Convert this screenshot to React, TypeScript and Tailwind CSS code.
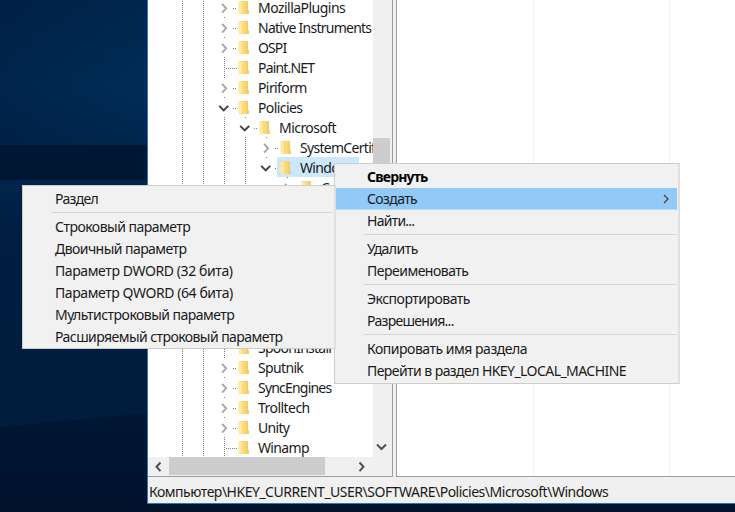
import React from 'react';

type Node = { label: string; level: number; state: 'open' | 'closed' | 'leaf'; tracking: string; selected?: boolean };
type Item = { label: string; tracking: string; bold?: boolean; active?: boolean };

const topNodes: Node[] = [
    { label: 'MozillaPlugins', level: 2, state: 'closed', tracking: 'tracking-[-0.53px]' },
    { label: 'Native Instruments', level: 2, state: 'closed', tracking: 'tracking-[-0.75px]' },
    { label: 'OSPI', level: 2, state: 'closed', tracking: 'tracking-[-0.9px]' },
    { label: 'Paint.NET', level: 2, state: 'leaf', tracking: 'tracking-[-0.83px]' },
    { label: 'Piriform', level: 2, state: 'closed', tracking: 'tracking-[-0.6px]' },
    { label: 'Policies', level: 2, state: 'open', tracking: 'tracking-[-0.6px]' },
    { label: 'Microsoft', level: 3, state: 'open', tracking: 'tracking-[-0.55px]' },
    { label: 'SystemCertificates', level: 4, state: 'closed', tracking: 'tracking-[-0.7px]' },
    { label: 'Windows', level: 4, state: 'open', tracking: 'tracking-[-0.65px]', selected: true },
    { label: 'CurrentVersion', level: 5, state: 'closed', tracking: 'tracking-[-0.6px]' },
];

const bottomNodes: Node[] = [
    { label: 'SpoonInstall', level: 2, state: 'leaf', tracking: 'tracking-[-0.75px]' },
    { label: 'Sputnik', level: 2, state: 'closed', tracking: 'tracking-[-0.65px]' },
    { label: 'SyncEngines', level: 2, state: 'closed', tracking: 'tracking-[-0.8px]' },
    { label: 'Trolltech', level: 2, state: 'closed', tracking: 'tracking-[-0.55px]' },
    { label: 'Unity', level: 2, state: 'closed', tracking: 'tracking-[-0.7px]' },
    { label: 'Winamp', level: 2, state: 'leaf', tracking: 'tracking-[-0.65px]' },
];

const contextMenu: Item[][] = [
    [
        { label: 'Свернуть', bold: true, tracking: 'tracking-[-0.8px]' },
        { label: 'Создать', active: true, tracking: 'tracking-[-0.62px]' },
        { label: 'Найти...', tracking: 'tracking-[-0.75px]' },
    ],
    [
        { label: 'Удалить', tracking: 'tracking-[-0.55px]' },
        { label: 'Переименовать', tracking: 'tracking-[-0.5px]' },
    ],
    [
        { label: 'Экспортировать', tracking: 'tracking-[-0.5px]' },
        { label: 'Разрешения...', tracking: 'tracking-[-0.7px]' },
    ],
    [
        { label: 'Копировать имя раздела', tracking: 'tracking-[-0.48px]' },
        { label: 'Перейти в раздел HKEY_LOCAL_MACHINE', tracking: 'tracking-[-0.56px]' },
    ],
];

const createMenu: Item[][] = [
    [{ label: 'Раздел', tracking: 'tracking-[-0.7px]' }],
    [
        { label: 'Строковый параметр', tracking: 'tracking-[-0.52px]' },
        { label: 'Двоичный параметр', tracking: 'tracking-[-0.55px]' },
        { label: 'Параметр DWORD (32 бита)', tracking: 'tracking-[-0.4px]' },
        { label: 'Параметр QWORD (64 бита)', tracking: 'tracking-[-0.42px]' },
        { label: 'Мультистроковый параметр', tracking: 'tracking-[-0.52px]' },
        { label: 'Расширяемый строковый параметр', tracking: 'tracking-[-0.56px]' },
    ],
];

function Wallpaper() {
    return (
        <svg className="absolute inset-0 h-full w-full" viewBox="0 0 735 512" preserveAspectRatio="none">
            <defs>
                <linearGradient id="sky" x1="0" y1="0" x2="0" y2="1">
                    <stop offset="0" stopColor="#00264d" />
                    <stop offset="0.6" stopColor="#002d58" />
                    <stop offset="1" stopColor="#00264e" />
                </linearGradient>
                <linearGradient id="side" x1="0" y1="0" x2="1" y2="0">
                    <stop offset="0" stopColor="#001a3c" stopOpacity="0.45" />
                    <stop offset="1" stopColor="#001a3c" stopOpacity="0" />
                </linearGradient>
                <linearGradient id="floor" x1="0" y1="0" x2="0" y2="1">
                    <stop offset="0" stopColor="#00254c" />
                    <stop offset="0.15" stopColor="#001e40" />
                    <stop offset="1" stopColor="#001c3c" />
                </linearGradient>
                <linearGradient id="shade" x1="0" y1="0" x2="0" y2="1">
                    <stop offset="0" stopColor="#001633" />
                    <stop offset="1" stopColor="#00122c" />
                </linearGradient>
            </defs>
            <rect width="735" height="146" fill="url(#sky)" />
            <rect width="148" height="146" fill="url(#side)" />
            <rect y="145" width="735" height="36" fill="#001733" />
            <rect y="180" width="735" height="332" fill="url(#floor)" />
            <path d="M0 427L148 413H735V512H0Z" fill="url(#shade)" />
        </svg>
    );
}

function Guide() {
    return (
        <svg className="h-5 w-[21px] shrink-0" viewBox="0 0 21 20">
            <path d="M10.5 0V20" stroke="#808080" strokeDasharray="1 1" />
        </svg>
    );
}

function Toggle({ state }: { state: Node['state'] }) {
    return (
        <svg className="h-5 w-6 shrink-0" viewBox="0 0 24 20" fill="none">
            {state === 'leaf' && <path d="M10.5 0V20M12 11.5H23" stroke="#808080" strokeDasharray="1 1" />}
            {state !== 'leaf' && <path d="M10.5 0V1M19 11.5H23" stroke="#808080" strokeDasharray="1 1" />}
            {state === 'closed' && <path d="M8 6.9L12.2 11.3L8 15.7" stroke="#a6a6a6" strokeWidth="1.9" />}
            {state === 'open' && <path d="M5.2 8.9L9.7 13.4L14.2 8.9" stroke="#404040" strokeWidth="2" />}
        </svg>
    );
}

function Folder() {
    return (
        <svg className="h-5 w-3 shrink-0" viewBox="0 0 12 20">
            <path d="M1 4H10V13L11 14V17H1Z" fill="#f9d978" />
            <path d="M7.5 4H10V13L11 14V17H8Z" fill="#f3cd68" />
            <path d="M0.5 4L4 5V18.3L0.5 16.5Z" fill="#ffe8a2" />
        </svg>
    );
}

function TreeRow({ node }: { node: Node }) {
    return (
        <div className="flex h-5 shrink-0 items-center whitespace-nowrap pl-6">
            {Array.from({ length: Math.min(node.level, 4) }, (_, i) => <Guide key={i} />)}
            {node.level === 5 && <span className="w-[21px] shrink-0" />}
            <Toggle state={node.state} />
            <div className={`flex h-5 items-start gap-2 pr-1 ${node.selected ? '-ml-[3px] bg-[#cce8ff] pl-[3px]' : ''}`}>
                <Folder />
                <span className={`leading-[21px] ${node.tracking}`}>{node.label}</span>
            </div>
        </div>
    );
}

function Arrow({ d }: { d: string }) {
    return (
        <svg className="h-[17px] w-[17px] shrink-0" viewBox="0 0 17 17" fill="none">
            <path d={d} stroke="#505050" strokeWidth="2" />
        </svg>
    );
}

function Menu({ groups, className }: { groups: Item[][]; className: string }) {
    return (
        <div className={`absolute border border-r-2 border-[#cccccc] border-r-[#e0e0e0] bg-[#f1f1f1] pt-0.5 ${className}`}>
            {groups.map((group, i) => (
                <div key={i}>
                    {i > 0 && <div className="mb-[3px] ml-[29px] mr-px mt-0.5 h-px bg-[#d5d5d5]" />}
                    {group.map((item) => (
                        <div
                            key={item.label}
                            className={`mx-px flex h-[22px] items-center justify-between whitespace-nowrap pl-[31px] pr-2 ${item.active ? 'border-b border-[#b8dcf8] bg-[#91c9f7]' : 'pb-px'} ${item.bold ? 'font-bold text-black' : ''}`}
                        >
                            <span className={item.tracking}>{item.label}</span>
                            {item.active && (
                                <svg className="h-[10px] w-[6px]" viewBox="0 0 6 10" fill="none">
                                    <path d="M1 1L5 5L1 9" stroke="#404040" strokeWidth="1.2" />
                                </svg>
                            )}
                        </div>
                    ))}
                </div>
            ))}
        </div>
    );
}

export default function App() {
    return (
        <div className="relative h-[512px] w-[735px] overflow-hidden bg-[#00142e] font-['Noto_Sans','Open_Sans',sans-serif] text-[14px] text-[#1a1a1a]">
            <Wallpaper />
            <div className="relative ml-[147px] flex h-[504px] flex-col border-b border-l border-[#2878bc] bg-[#f0f0f0]">
                <div className="flex h-[477px] gap-[3px]">
                    <div className="flex w-[245px] flex-col border-b border-r border-[#9a9ca6]">
                        <div className="flex h-[457px]">
                            <div className="w-[225px] overflow-hidden bg-white">
                                <div className="-mt-[3px]">
                                    {topNodes.map((node) => <TreeRow key={node.label} node={node} />)}
                                    <div className="h-[140px]" />
                                    {bottomNodes.map((node) => <TreeRow key={node.label} node={node} />)}
                                </div>
                            </div>
                            <div className="flex w-[17px] flex-col justify-between pt-[138px]">
                                <div className="h-[110px] bg-[#cdcdcd]" />
                                <Arrow d="M4 4.5L8.5 9L13 4.5" />
                            </div>
                        </div>
                        <div className="flex h-[18px] items-center pl-px">
                            <Arrow d="M11.5 4.5L7.5 8.8L11.5 13.1" />
                            <div className="ml-[3px] h-[18px] w-[156px] bg-[#cdcdcd]" />
                            <div className="ml-7">
                                <Arrow d="M6.5 4.5L10.5 8.8L6.5 13.1" />
                            </div>
                        </div>
                    </div>
                    <div className="flex flex-1 border-b border-l border-[#9a9ca6] bg-white">
                        <div className="w-[137px] border-r border-[#eef2fb]" />
                        <div className="w-[136px] border-r border-[#eef2fb]" />
                    </div>
                </div>
                <div className="whitespace-nowrap px-px pt-[5px] leading-[20px] tracking-[-0.49px]">
                    Компьютер\HKEY_CURRENT_USER\SOFTWARE\Policies\Microsoft\Windows
                </div>
            </div>
            <Menu groups={contextMenu} className="left-[334px] top-[163px] h-[221px] w-[346px]" />
            <Menu groups={createMenu} className="left-[22px] top-[185px] h-[164px] w-[314px]" />
        </div>
    );
}
